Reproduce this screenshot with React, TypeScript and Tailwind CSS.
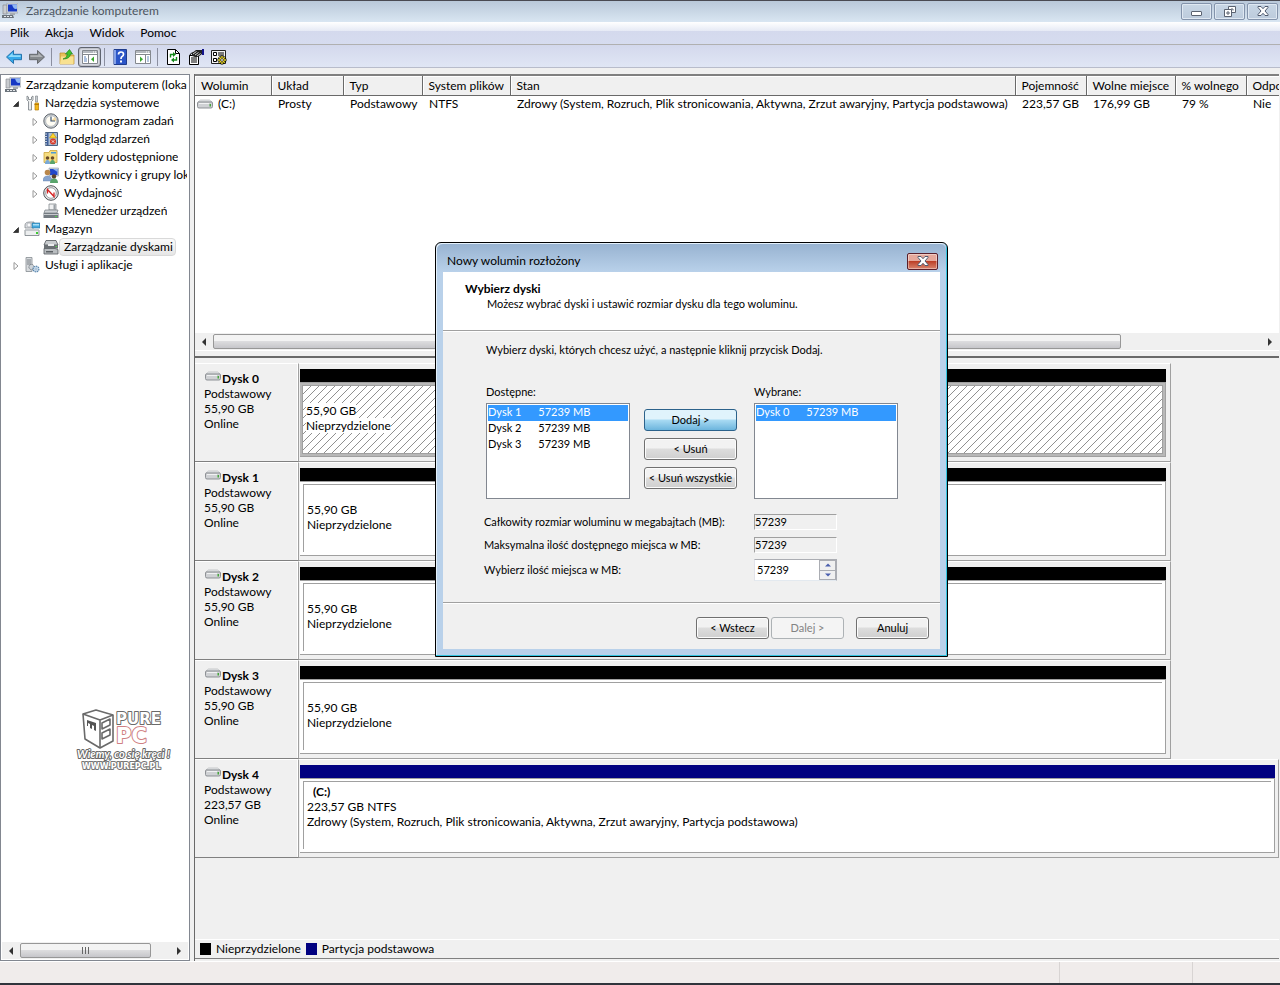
import { useState, type ReactNode } from 'react';
import { clsx } from 'clsx';

interface IconProps {
  children: ReactNode;
  className?: string;
}

const Icon = ({ children, className }: IconProps) => (
  <svg viewBox="0 0 16 16" className={clsx('h-4 w-4 shrink-0', className)} aria-hidden="true">
    {children}
  </svg>
);

const ComputerIcon = () => (
  <Icon>
    <path d="M1 2h4v9H1z" fill="#c9ccd0" stroke="#7d8288" strokeWidth=".6" />
    <path d="M5 0h11v10H5z" fill="#d9dde2" stroke="#8d949c" strokeWidth=".6" />
    <path d="M6 1.500h9v7H6z" fill="#1638c4" />
    <path d="M10 1.500h5v4q-3 2-5-4z" fill="#8fb6f4" />
    <path d="M8 10h5v2H8z" fill="#a7acb2" />
    <path d="M0 12h11l1 3H0z" fill="#6c747c" />
    <path d="M2 13h2v1H2zM5 13h2v1H5zM8 13h2v1H8z" fill="#e6e9ec" />
  </Icon>
);

const ToolsIcon = () => (
  <Icon>
    <path d="M3 1v4l1.500 1.500V15h3V6.500L9 5V1L7.500 2v2.500h-3V2z" fill="#eceeef" stroke="#777d83" strokeWidth=".8" />
    <path d="M11.500 1h2v6h-2z" fill="#c9cdd1" stroke="#777d83" strokeWidth=".6" />
    <path d="M11 8h3.500v7H11z" fill="#f3b71b" stroke="#b57b08" strokeWidth=".7" />
    <path d="M10.500 9.500h4.500" stroke="#b57b08" />
  </Icon>
);

const ClockIcon = () => (
  <Icon>
    <circle cx="8" cy="8" r="7.200" fill="#c8cdd2" stroke="#62686e" />
    <circle cx="8" cy="8" r="5.300" fill="#fffdf4" stroke="#a0a5aa" strokeWidth=".5" />
    <path d="M8 8l4-4a5 5 0 0 1 1 4z" fill="#f6dba0" />
    <path d="M8 3.500V8h4" fill="none" stroke="#3d5573" strokeWidth="1.200" />
  </Icon>
);

const EventIcon = () => (
  <Icon>
    <path d="M2.500 1.500h12v13h-12z" fill="#aebed2" stroke="#4b6384" />
    <path d="M3 2h2.500v12H3z" fill="#3f5f9a" />
    <path d="M1 3h3M1 5.500h3M1 8h3M1 10.500h3M1 13h3" stroke="#dfe3e8" strokeWidth=".9" />
    <path d="M10 2l3.500 5h-7z" fill="#ffd42a" stroke="#a98107" strokeWidth=".5" />
    <circle cx="10" cy="10.500" r="3" fill="#d63a2a" />
    <path d="M8.800 9.300l2.400 2.400m0-2.400l-2.400 2.400" stroke="#fff" strokeWidth=".8" />
  </Icon>
);

const SharedFolderIcon = () => (
  <Icon>
    <path d="M1 3.500h5l1-2h7v12H1z" fill="#f6dd80" stroke="#cda43c" strokeWidth=".8" />
    <path d="M8 3h5v1.500H8z" fill="#4c9bd6" />
    <circle cx="4.500" cy="9" r="1.800" fill="#6a4c2a" />
    <circle cx="9.500" cy="9" r="1.800" fill="#6a4c2a" />
    <path d="M2 15q0-4 2.500-4T7 15z" fill="#7aa9d6" />
    <path d="M7 15q0-4 2.500-4T12 15z" fill="#59a46b" />
  </Icon>
);

const UsersIcon = () => (
  <Icon>
    <path d="M6 1h9.500v8H6z" fill="#cfd6de" stroke="#8e98a4" strokeWidth=".6" />
    <path d="M7 2h7.500v6H7z" fill="#2247c9" />
    <path d="M10 2h4.500v3z" fill="#8db2f1" />
    <circle cx="4.500" cy="5.500" r="2.800" fill="#b9874b" />
    <path d="M0 14q0-5 4.500-5T9 14z" fill="#86a4cf" stroke="#5c7aa6" strokeWidth=".4" />
    <circle cx="11" cy="9.500" r="2.200" fill="#5d4127" />
    <path d="M7 16q0-4.500 4-4.500t4 4.500z" fill="#59a46b" />
  </Icon>
);

const PerfIcon = () => (
  <Icon>
    <circle cx="8" cy="8" r="7.300" fill="#e8e9ea" stroke="#4e5256" />
    <circle cx="8" cy="8" r="5.300" fill="#fff" stroke="#777b80" strokeWidth=".7" />
    <path d="M4.500 8.500v-4l6.500 7V7.500" fill="none" stroke="#d42222" strokeWidth="1.300" />
  </Icon>
);

const DeviceIcon = () => (
  <Icon>
    <path d="M6 1h7v6H6z" fill="#f0f1f2" stroke="#777d83" strokeWidth=".7" />
    <path d="M10.500 1.500h2v5h-2z" fill="#9aa0a6" />
    <path d="M2 7h13l-1 3H1z" fill="#cdd1d5" stroke="#767c82" strokeWidth=".7" />
    <path d="M.5 10h15v5H.5z" fill="#747b82" />
    <path d="M1 11h14v1H1z" fill="#c6cacd" />
    <path d="M12 13h2v1h-2z" fill="#52d049" />
  </Icon>
);

const StorageIcon = () => (
  <Icon>
    <path d="M1 4q0-3 5-3h4v6H1z" fill="#dadde0" stroke="#7b8187" strokeWidth=".7" />
    <circle cx="5" cy="4" r="2" fill="#f9fafb" stroke="#9499a0" strokeWidth=".5" />
    <path d="M8 2h8v5H8z" fill="#45a9dd" stroke="#26709b" strokeWidth=".6" />
    <path d="M9 3h6v1.500H9z" fill="#a9def7" />
    <path d="M1 9h14v5.500H1z" fill="#eceeef" stroke="#757b81" strokeWidth=".8" />
    <path d="M2.500 8h11l1.500 2H1z" fill="#c4c8cc" />
    <path d="M12 11h2v2h-2z" fill="#3ec932" />
  </Icon>
);

const DiskMgmtIcon = () => (
  <Icon>
    <path d="M3 1.500h10l2 4.500H1z" fill="#c9cccf" stroke="#4f5458" strokeWidth=".8" />
    <path d="M1 6h14v3.500H1z" fill="#6b7074" />
    <path d="M5 5h6v2H5z" fill="#eceeef" />
    <path d="M1 9.500h11l3 1v4.500H1z" fill="#b9bdc0" stroke="#54595d" strokeWidth=".8" />
    <path d="M3 12h7v1.500H3z" fill="#5c6165" />
    <path d="M12.500 7h1.500v1h-1.500z" fill="#55d84b" />
  </Icon>
);

const ServicesIcon = () => (
  <Icon>
    <path d="M2 .5h6v14H2z" fill="#d8dbde" stroke="#858b91" strokeWidth=".8" />
    <path d="M3 3h4M3 5h4M3 7h4" stroke="#767c82" />
    <circle cx="7.500" cy="10" r="2.600" fill="#cfd4d9" stroke="#6d747b" strokeWidth=".9" strokeDasharray="1.500 .6" />
    <circle cx="12" cy="12" r="2.900" fill="#cfe0ef" stroke="#5a86ac" strokeWidth="1.200" strokeDasharray="1.500 .7" />
    <circle cx="12" cy="12" r="1" fill="#fff" stroke="#5a86ac" strokeWidth=".5" />
  </Icon>
);

const DriveIcon = () => (
  <svg viewBox="0 0 16 10" className="h-[10px] w-4 shrink-0" aria-hidden="true">
    <path d="M3.500 1h9l2.500 2H1z" fill="#e6e8ea" stroke="#b4b7ba" strokeWidth=".7" />
    <path d="M.5 4q0-1 1-1h13q1 0 1 1v3.500q0 1.500-1.500 1.500H2Q.5 9 .5 7.500z" fill="#cfd1d4" stroke="#85888c" strokeWidth=".9" />
    <path d="M2 4.500h10" stroke="#f1f2f3" />
    <path d="M12.500 5h1.500v2.500h-1.500z" fill="#45a53a" />
  </svg>
);

const BackIcon = () => (
  <Icon>
    <path d="M.5 8L7.500 1.500v3.800h8v5.400h-8v3.800z" fill="#35a9ea" stroke="#1c6ba6" strokeWidth=".9" />
    <path d="M2.200 8L6.600 4v2.300h8V8z" fill="#8fdcfb" />
  </Icon>
);

const ForwardIcon = () => (
  <Icon>
    <path d="M15.500 8L8.500 1.500v3.800h-8v5.400h8v3.800z" fill="#85898d" stroke="#5d6165" strokeWidth=".9" />
    <path d="M13.800 8L9.400 4v2.300h-8V8z" fill="#b0b3b6" />
  </Icon>
);

const UpFolderIcon = () => (
  <Icon>
    <path d="M1 4h5l1.500 2H15v9H1z" fill="#e8c15a" stroke="#b98b26" strokeWidth=".7" />
    <path d="M2 7.500h12.500V15H1z" fill="#f8e191" />
    <path d="M4 10q4-.5 4.500-5H6.500L10.500.5 13.500 5h-2Q11 10 4 10z" fill="#3fc22e" stroke="#23821a" strokeWidth=".7" />
  </Icon>
);

const PaneIcon = ({ flipped }: { flipped?: boolean }) => (
  <Icon>
    <path d="M.5 1.500h15v13H.5z" fill="#fff" stroke="#84888e" />
    <path d="M1 2h14v2H1z" fill="#b4b8be" />
    <path d="M11 3h1M13 3h1" stroke="#fff" />
    <path d="M1 5.500h14" stroke="#84888e" />
    {flipped ? (
      <>
        <path d="M10.500 6v8.500" stroke="#84888e" />
        <path d="M12 8h2M12 10h2M12 12h2" stroke="#6d8fc0" />
        <path d="M5 7.500v5.500L8 10.250z" fill="#39a82e" />
      </>
    ) : (
      <>
        <path d="M6.500 6v8.500" stroke="#84888e" />
        <path d="M2 8h2M2 10h3M2 12h3" stroke="#5e84bd" />
        <path d="M12 7.500v5.500L9 10.250z" fill="#39a82e" />
      </>
    )}
  </Icon>
);

const HelpIcon = () => (
  <Icon>
    <path d="M2 .5h12.500v15H2z" fill="#2b55c8" stroke="#203c8d" />
    <path d="M2 1h2v14H2z" fill="#86a2e6" />
    <path d="M6.500 5.500q0-2.500 2.500-2.500t2.500 2.200q0 1.500-1.500 2.300-1 .5-1 2.500" fill="none" stroke="#fff" strokeWidth="1.700" />
    <path d="M8 11.500h2v2H8z" fill="#fff" />
  </Icon>
);

const RefreshIcon = () => (
  <Icon>
    <path d="M2.500.5h8l4 4v11h-12z" fill="#fff" stroke="#000" />
    <path d="M10.500.5v4h4" fill="none" stroke="#000" />
    <path d="M5.500 8.500V5.500h3" fill="none" stroke="#168a1c" strokeWidth="1.400" />
    <path d="M8 3v5l3-2.500z" fill="#168a1c" />
    <path d="M11.500 8v3h-3" fill="none" stroke="#168a1c" strokeWidth="1.400" />
    <path d="M9 8.500v5L6 11z" fill="#168a1c" />
  </Icon>
);

const PropertiesIcon = () => (
  <Icon>
    <path d="M1.500 6.500h9v9h-9z" fill="#fff" stroke="#000" />
    <path d="M1.500 6.500l2-2.500h5M3 9h6M3 11h6M3 13h6" fill="none" stroke="#000" />
    <path d="M4 4l4-3h6v4l-4 3H7L4 7z" fill="#222" />
    <path d="M5 5l3.500-2.500M7 6l3.500-2.500M9 7l3.500-2.500" stroke="#fff" strokeWidth=".8" />
    <path d="M14 0h2v6h-2z" fill="#14148c" />
  </Icon>
);

const SettingsIcon = () => (
  <Icon>
    <path d="M.5 1.500h14v13H.5z" fill="#f3f3f3" stroke="#222" />
    <path d="M2.500 3.500h3v3h-3zM2.500 9.500h3v3h-3z" fill="#fff" stroke="#000" />
    <path d="M7 4h6M7 6h6M7 10h3" stroke="#000" />
    <path d="M11 6.500v9M6.500 11h9M8 8l6 6M14 8l-6 6" stroke="#000" strokeWidth="2.600" />
    <path d="M11 7v8M7 11h8M8.300 8.300l5.400 5.400M13.700 8.300l-5.400 5.400" stroke="#f2df2c" strokeWidth="1.400" />
    <circle cx="11" cy="11" r="1.400" fill="#fff" stroke="#000" strokeWidth=".7" />
  </Icon>
);

const Cross = () => (
  <svg viewBox="0 0 12 10" className="h-[10px] w-3" aria-hidden="true">
    <path d="M1 .5h3l2 2.200L8 .5h3v1L8 5l3 3.500v1H8L6 7.300 4 9.500H1v-1L4 5 1 1.500z" fill="#fff" stroke="#4f5a6e" />
  </svg>
);

const Arrow = ({ className, d }: { className?: string; d: string }) => (
  <svg viewBox="0 0 8 8" className={clsx('h-2 w-2', className)} aria-hidden="true">
    <path d={d} fill="currentColor" />
  </svg>
);

const LEFT = 'M6 0v8L2 4z';
const RIGHT = 'M2 0v8l4-4z';
const UP = 'M0 6h8L4 2z';
const DOWN = 'M0 2h8L4 6z';

interface TreeNode {
  label: string;
  icon: ReactNode;
  level: 0 | 1 | 2;
  expander?: 'open' | 'closed';
  selected?: boolean;
}

const tree: TreeNode[] = [
  { label: 'Zarządzanie komputerem (lokalne)', icon: <ComputerIcon />, level: 0 },
  { label: 'Narzędzia systemowe', icon: <ToolsIcon />, level: 1, expander: 'open' },
  { label: 'Harmonogram zadań', icon: <ClockIcon />, level: 2, expander: 'closed' },
  { label: 'Podgląd zdarzeń', icon: <EventIcon />, level: 2, expander: 'closed' },
  { label: 'Foldery udostępnione', icon: <SharedFolderIcon />, level: 2, expander: 'closed' },
  { label: 'Użytkownicy i grupy lokalne', icon: <UsersIcon />, level: 2, expander: 'closed' },
  { label: 'Wydajność', icon: <PerfIcon />, level: 2, expander: 'closed' },
  { label: 'Menedżer urządzeń', icon: <DeviceIcon />, level: 2 },
  { label: 'Magazyn', icon: <StorageIcon />, level: 1, expander: 'open' },
  { label: 'Zarządzanie dyskami', icon: <DiskMgmtIcon />, level: 2, selected: true },
  { label: 'Usługi i aplikacje', icon: <ServicesIcon />, level: 1, expander: 'closed' },
];

const indent = { 0: 'pl-[3px]', 1: 'pl-[6px]', 2: 'pl-[25px]' };

const TreeRow = ({ node }: { node: TreeNode }) => (
  <li className={clsx('flex h-[18px] items-center', indent[node.level])}>
    {node.level > 0 && (
      <span className="flex w-4 shrink-0 justify-center">
        {node.expander && (
          <svg viewBox="0 0 8 8" className="mt-[2px] h-2 w-2" aria-hidden="true">
            {node.expander === 'open' ? (
              <path d="M6.500 1.500v5h-5z" fill="#333" stroke="#111" strokeWidth=".6" />
            ) : (
              <path d="M2 .5v7L6 4z" fill="#fff" stroke="#989898" />
            )}
          </svg>
        )}
      </span>
    )}
    {node.icon}
    <span
      className={clsx(
        'h-[18px] overflow-hidden rounded-sm border px-1 leading-4 whitespace-nowrap',
        node.selected ? 'border-[#d9d9d9] bg-linear-to-b from-[#fafafa] to-[#e6e6e6] pr-[2px]' : 'border-transparent pr-0',
      )}
    >
      {node.label}
    </span>
  </li>
);

const ScrollBar = ({ thumb, grip }: { thumb: string; grip?: boolean }) => (
  <div className="flex h-[17px] items-center bg-[#f0f0f0]">
    <button type="button" aria-label="Przewiń w lewo" className="flex h-full w-[18px] items-center justify-center text-[#333]">
      <Arrow d={LEFT} />
    </button>
    <div className="h-full flex-1 py-px">
      <div
        className={clsx(
          'flex h-[15px] items-center justify-center gap-[2px] rounded-xs border border-[#979797] bg-linear-to-b from-[#f3f3f3] from-45% via-[#dcdcde] via-50% to-[#c6c6ca]',
          thumb,
        )}
      >
        {grip && [0, 1, 2].map((i) => <span key={i} className="h-[7px] w-px bg-[#666]" />)}
      </div>
    </div>
    <button type="button" aria-label="Przewiń w prawo" className="flex h-full w-[18px] items-center justify-center text-[#333]">
      <Arrow d={RIGHT} />
    </button>
  </div>
);

const PureLogo = () => (
  <svg viewBox="0 0 104 64" className="absolute top-[634px] left-[73px] h-16 w-[104px]" role="img" aria-label="PurePC">
    <g fill="#fff" stroke="#6a6a6a" strokeWidth="1.600" strokeLinejoin="round">
      <path d="M9 5L22 1l17 5v26l-13 7-15-9z" />
      <path d="M9 5l17 6 13-5M26 11v28" />
      <path d="M28 14l8-4v6l-8 4zM28 24l8-4v6l-8 4z" />
    </g>
    <path d="M13 11l9 3v8l-2-1v-4l-2-1v4l-2-1v-4l-2-1v3h-1z" fill="#555" />
    <g fill="#fff" strokeLinejoin="round" paintOrder="stroke">
      <text x="42" y="15" fontSize="15" fontWeight="700" fontFamily="DejaVu Sans" stroke="#6a6a6a" strokeWidth="2">PURE</text>
      <text x="42" y="34" fontSize="21" fontWeight="700" fontFamily="DejaVu Sans" stroke="#cf7f83" strokeWidth="2">PC</text>
      <text x="3" y="49" fontSize="11" fontWeight="700" fontStyle="italic" fontFamily="Lato" stroke="#666" strokeWidth="2">Wiemy, co się kręci !</text>
      <text x="8" y="60" fontSize="8" fontWeight="700" fontFamily="DejaVu Sans" stroke="#777" strokeWidth="2">WWW.PUREPC.PL</text>
    </g>
  </svg>
);

const columns = [
  { label: 'Wolumin', width: 'w-[76px]', value: '(C:)' },
  { label: 'Układ', width: 'w-[72px]', value: 'Prosty' },
  { label: 'Typ', width: 'w-[79px]', value: 'Podstawowy' },
  { label: 'System plików', width: 'w-[88px]', value: 'NTFS' },
  { label: 'Stan', width: 'w-[505px]', value: 'Zdrowy (System, Rozruch, Plik stronicowania, Aktywna, Zrzut awaryjny, Partycja podstawowa)' },
  { label: 'Pojemność', width: 'w-[71px]', value: '223,57 GB' },
  { label: 'Wolne miejsce', width: 'w-[89px]', value: '176,99 GB' },
  { label: '% wolnego', width: 'w-[71px]', value: '79 %' },
  { label: 'Odporność na uszkodzenia', width: 'w-[160px]', value: 'Nie' },
];

const VolumeTable = () => (
  <table className="w-[1211px] table-fixed border-collapse text-left">
    <thead>
      <tr className="h-[19px] bg-[#f0f0f0]">
        {columns.map((c) => (
          <th
            key={c.label}
            className={clsx('overflow-hidden border-r border-b border-[#696969] pt-[2px] pr-0 pb-0 pl-[6px] font-normal whitespace-nowrap shadow-[inset_1px_1px_#fff]', c.width)}
          >
            {c.label}
          </th>
        ))}
      </tr>
    </thead>
    <tbody>
      <tr className="h-[18px]">
        {columns.map((c, i) => (
          <td key={c.label} className={clsx('whitespace-nowrap', i === 0 ? 'pl-[2px]' : 'pl-[7px]')}>
            {i === 0 ? (
              <span className="flex items-center gap-[5px]">
                <DriveIcon />
                {c.value}
              </span>
            ) : (
              c.value
            )}
          </td>
        ))}
      </tr>
    </tbody>
  </table>
);

interface Disk {
  name: string;
  size: string;
  volume?: string;
  lines: string[];
  selected?: boolean;
}

const disks: Disk[] = [
  { name: 'Dysk 0', size: '55,90 GB', lines: ['55,90 GB', 'Nieprzydzielone'], selected: true },
  { name: 'Dysk 1', size: '55,90 GB', lines: ['55,90 GB', 'Nieprzydzielone'] },
  { name: 'Dysk 2', size: '55,90 GB', lines: ['55,90 GB', 'Nieprzydzielone'] },
  { name: 'Dysk 3', size: '55,90 GB', lines: ['55,90 GB', 'Nieprzydzielone'] },
  {
    name: 'Dysk 4',
    size: '223,57 GB',
    volume: '(C:)',
    lines: ['223,57 GB NTFS', 'Zdrowy (System, Rozruch, Plik stronicowania, Aktywna, Zrzut awaryjny, Partycja podstawowa)'],
  },
];

const DiskRow = ({ disk }: { disk: Disk }) => (
  <section className="flex h-[99px] leading-[15px]">
    <div className="w-[104px] shrink-0 border-t border-r border-b border-t-white border-r-[#a0a0a0] border-b-[#808080] pt-[7px] pl-[9px] shadow-[inset_-1px_0_#fff]">
      <h2 className="flex items-start gap-px pl-px font-bold">
        <DriveIcon />
        {disk.name}
      </h2>
      <p>Podstawowy</p>
      <p>{disk.size}</p>
      <p>Online</p>
    </div>
    <div className="min-w-0 flex-1">
      <div
        className={clsx(
          'flex h-full flex-col border-t border-r border-b border-t-white border-r-[#a0a0a0] border-b-[#a0a0a0] pt-[5px] pb-1 pl-px',
          disk.volume ? 'pr-[3px]' : 'w-[89%] pr-1',
        )}
      >
        <div className={clsx('h-[13px]', disk.volume ? 'bg-[#000080]' : 'bg-black')} />
        <div
          className={clsx(
            'flex-1 border-t border-r border-b border-[#a0a0a0]',
            disk.selected ? 'bg-[#b8b8b8] p-[2px]' : 'bg-white p-[3px] pt-[2px]',
          )}
        >
          <div
            className={clsx(
              'flex h-full flex-col items-start border-[#a0a0a0] pl-[3px]',
              disk.volume ? 'pt-[2px]' : 'pt-[17px]',
              disk.selected
                ? 'border bg-white bg-[linear-gradient(135deg,transparent_46%,#909090_46%_54%,transparent_54%)] bg-[size:8px_8px]'
                : 'border-t border-l',
            )}
          >
            {disk.volume && <p className="pl-[6px] font-bold">{disk.volume}</p>}
            {disk.lines.map((line) => (
              <p key={line} className={clsx('whitespace-nowrap', disk.selected && 'bg-white')}>
                {line}
              </p>
            ))}
          </div>
        </div>
      </div>
    </div>
  </section>
);

const dialogButton =
  'h-[22px] rounded-[3px] border border-[#707070] bg-linear-to-b from-[#f2f2f2] from-45% via-[#dddddd] via-50% to-[#cfcfcf] whitespace-nowrap shadow-[inset_0_0_0_1px_#fcfcfc]';

const readOnlyField = 'h-4 border border-t-[#a0a0a0] border-r-white border-b-white border-l-[#a0a0a0] bg-[#f0f0f0]';

const DiskList = ({ id, label, items }: { id: string; label: string; items: string[] }) => {
  const [value, setValue] = useState([items[0]]);
  return (
    <div className="w-36">
      <label htmlFor={id} className="mb-[3px] block leading-4">
        {label}
      </label>
      <select
        id={id}
        multiple
        value={value}
        onChange={(e) => setValue(Array.from(e.target.selectedOptions, (o) => o.value))}
        className="block h-24 w-full overflow-hidden border border-[#828790] bg-white p-px"
      >
        {items.map((item) => (
          <option
            key={item}
            value={item}
            className="h-4 min-h-0 p-0 leading-4 checked:bg-[linear-gradient(#3399ff,#3399ff)] checked:[-webkit-text-fill-color:#fff]"
          >
            {`${item}\u00a0\u00a0\u00a0\u00a0\u00a0\u00a057239 MB`}
          </option>
        ))}
      </select>
    </div>
  );
};

const SizeDialog = () => {
  const [size, setSize] = useState('57239');
  const step = (n: number) => setSize(String(Number(size) + n));

  return (
    <div
      role="dialog"
      aria-labelledby="dialog-title"
      className="absolute top-[242px] left-[435px] w-[513px] rounded-t-md border border-black bg-[#b9d1ea] p-[7px] pt-0 text-[11px] shadow-[inset_-1px_-1px_#35c5e0,inset_1px_1px_#e3f0fb]"
    >
      <header className="-mx-[6px] mt-px flex h-[28px] items-center rounded-t-md bg-linear-to-b from-[#98b3d1] to-[#b9d1ea] pr-2 pl-[10px]">
        <h2 id="dialog-title" className="flex-1 pt-[6px] text-[12px]">
          Nowy wolumin rozłożony
        </h2>
        <button
          type="button"
          aria-label="Zamknij"
          className="mt-[6px] flex h-[17px] w-[31px] items-center justify-center rounded-xs border border-[#5a1f2a] bg-linear-to-b from-[#e6a99c] from-45% via-[#bc4027] via-50% to-[#d8836c] shadow-[inset_0_0_0_1px_#ffffff66]"
        >
          <Cross />
        </button>
      </header>

      <div className="h-[59px] border-b border-[#a0a0a0] bg-white pt-[9px] pl-[22px]">
        <h3 className="text-[12px] leading-[15px] font-bold">Wybierz dyski</h3>
        <p className="pl-[22px] leading-[15px]">Możesz wybrać dyski i ustawić rozmiar dysku dla tego woluminu.</p>
      </div>

      <div className="border-t border-white bg-[#f0f0f0]">
        <div className="pt-[10px] pr-[42px] pb-[21px] pl-[43px]">
          <p className="leading-4">Wybierz dyski, których chcesz użyć, a następnie kliknij przycisk Dodaj.</p>

          <div className="mt-[26px] flex">
            <DiskList id="available" label="Dostępne:" items={['Dysk 1', 'Dysk 2', 'Dysk 3']} />
            <div className="mr-[17px] ml-[14px] flex w-[93px] flex-col gap-[7px] pt-[25px]">
              <button
                type="button"
                className="h-[22px] rounded-[3px] border border-[#2c628b] bg-linear-to-b from-[#e0f3fc] from-45% via-[#a9dbf3] via-50% to-[#6cb5dd]"
              >
                Dodaj &gt;
              </button>
              <button type="button" className={dialogButton}>
                &lt; Usuń
              </button>
              <button type="button" className={dialogButton}>
                &lt; Usuń wszystkie
              </button>
            </div>
            <DiskList id="chosen" label="Wybrane:" items={['Dysk 0']} />
          </div>

          <div className="-ml-[2px] grid grid-cols-[270px_83px] grid-rows-[17px_17px_22px] items-center gap-y-[6px] pt-[14px]">
            <label htmlFor="total">Całkowity rozmiar woluminu w megabajtach (MB):</label>
            <input id="total" readOnly value="57239" className={readOnlyField} />
            <label htmlFor="max">Maksymalna ilość dostępnego miejsca w MB:</label>
            <input id="max" readOnly value="57239" className={readOnlyField} />
            <label htmlFor="size">Wybierz ilość miejsca w MB:</label>
            <div className="flex h-[22px] border border-[#abadb3] border-b-[#e3e9ef] border-l-[#e2e3ea] bg-white">
              <input id="size" value={size} onChange={(e) => setSize(e.target.value)} className="w-16 pl-[2px]" />
              <div className="flex w-[17px] flex-col gap-px bg-[#abadb3] p-px">
                <button type="button" aria-label="Więcej" onClick={() => step(1)} className="flex flex-1 items-center justify-center bg-[#f0f0f0] text-[#4a5fae]">
                  <Arrow d={UP} className="h-[6px] w-[6px]" />
                </button>
                <button type="button" aria-label="Mniej" onClick={() => step(-1)} className="flex flex-1 items-center justify-center bg-[#f0f0f0] text-[#4a5fae]">
                  <Arrow d={DOWN} className="h-[6px] w-[6px]" />
                </button>
              </div>
            </div>
          </div>
        </div>

        <footer className="flex h-[47px] justify-end gap-[2px] border-t border-[#a0a0a0] pt-[14px] pr-[11px] shadow-[inset_0_1px_#fff]">
          <button type="button" className={clsx(dialogButton, 'w-[73px]')}>
            &lt; Wstecz
          </button>
          <button type="button" disabled className="h-[22px] w-[73px] rounded-[3px] border border-[#adb2b5] bg-[#f4f4f4] text-[#838383]">
            Dalej &gt;
          </button>
          <button type="button" className={clsx(dialogButton, 'ml-[10px] w-[73px]')}>
            Anuluj
          </button>
        </footer>
      </div>
    </div>
  );
};

const windowButton =
  'flex h-[17px] w-[31px] items-center justify-center rounded-xs border border-[#8393ab] bg-linear-to-b from-[#c8d6e5] to-[#bccbdc] shadow-[inset_0_0_0_1px_#dfe8f2]';

const toolButton = 'flex h-5 w-[23px] items-center justify-center';

const Separator = () => <span className="mx-[3px] h-[18px] w-px bg-[#8b8fa0]" />;

export default function App() {
  return (
    <div className="relative flex h-screen min-h-[700px] flex-col overflow-hidden bg-[#f0f0f0] font-['Lato','Noto_Sans',sans-serif] text-[12px] leading-4 text-black">
      <header className="flex h-[22px] shrink-0 items-center border-t border-[#4a4a52] bg-linear-to-b from-[#b9c8d9] to-[#d9e6f2] pr-[2px] pb-px pl-[2px]">
        <ComputerIcon />
        <h1 className="flex-1 pl-2 text-[#4c5560]">Zarządzanie komputerem</h1>
        <div className="flex gap-[2px]">
          <button type="button" aria-label="Minimalizuj" className={windowButton}>
            <span className="mt-1 h-[5px] w-[11px] rounded-[1px] border border-[#5a6270] bg-white" />
          </button>
          <button type="button" aria-label="Przywróć" className={windowButton}>
            <svg viewBox="0 0 12 11" className="h-[11px] w-3" fill="#fff" stroke="#5a6270">
              <path d="M4.500.5h7v6h-7z" />
              <path d="M7 3h2v1.500" />
              <path d="M.5 3.500h7v7h-7z" />
              <path d="M3 6h2v2H3z" />
            </svg>
          </button>
          <button type="button" aria-label="Zamknij okno" className={windowButton}>
            <Cross />
          </button>
        </div>
      </header>

      <nav className="flex h-[23px] shrink-0 items-center gap-4 border-b border-[#b0b0b0] bg-[linear-gradient(#fff,#e6eaf5_40%,#d4d9ed_41%,#d6dcef)] pl-[10px]">
        {['Plik', 'Akcja', 'Widok', 'Pomoc'].map((item) => (
          <button key={item} type="button">
            {item}
          </button>
        ))}
      </nav>

      <div role="toolbar" className="flex h-[23px] shrink-0 items-center border-b border-[#b8bccb] bg-linear-to-b from-[#d3d8ec] to-[#e0e6f5] pt-[2px] pl-[2px]">
        <button type="button" aria-label="Wstecz" className={toolButton}>
          <BackIcon />
        </button>
        <button type="button" aria-label="Dalej" className={toolButton}>
          <ForwardIcon />
        </button>
        <Separator />
        <button type="button" aria-label="W górę" className={toolButton}>
          <UpFolderIcon />
        </button>
        <button type="button" aria-label="Drzewo konsoli" className={clsx(toolButton, 'rounded-[3px] border border-[#5f6470] bg-[#dcdfe8] shadow-[inset_0_0_2px_#777]')}>
          <PaneIcon />
        </button>
        <Separator />
        <button type="button" aria-label="Pomoc" className={toolButton}>
          <HelpIcon />
        </button>
        <button type="button" aria-label="Okienko akcji" className={toolButton}>
          <PaneIcon flipped />
        </button>
        <Separator />
        <button type="button" aria-label="Odśwież" className={toolButton}>
          <RefreshIcon />
        </button>
        <button type="button" aria-label="Właściwości" className={toolButton}>
          <PropertiesIcon />
        </button>
        <button type="button" aria-label="Ustawienia" className={toolButton}>
          <SettingsIcon />
        </button>
      </div>

      <main className="flex min-h-0 flex-1 gap-1 pt-[6px]">
        <aside className="relative flex w-[190px] shrink-0 flex-col border border-[#828790] bg-white px-px pb-px">
          <ul className="flex-1 overflow-hidden pt-px">
            {tree.map((node) => (
              <TreeRow key={node.label} node={node} />
            ))}
          </ul>
          <ScrollBar thumb="w-[131px]" grip />
          <PureLogo />
        </aside>

        <div className="mr-px flex min-w-0 flex-1 flex-col border-l border-[#696969]">
          <div className="flex h-[284px] shrink-0 flex-col border-t-2 border-b-2 border-t-[#808080] border-b-[#696969] bg-white">
            <div className="flex-1 overflow-hidden">
              <VolumeTable />
            </div>
            <ScrollBar thumb="w-13/15" />
            <div className="h-[6px] border-t border-white bg-[#f0f0f0]" />
          </div>

          <div className="flex-1 overflow-hidden pt-[5px]">
            {disks.map((disk) => (
              <DiskRow key={disk.name} disk={disk} />
            ))}
          </div>

          <footer className="mb-[2px] flex h-[20px] shrink-0 items-center border-t border-b border-t-white border-b-[#808080] pl-[5px]">
            <span className="h-3 w-[11px] bg-black" />
            <span className="pr-[5px] pl-[5px]">Nieprzydzielone</span>
            <span className="h-3 w-[11px] bg-[#000080]" />
            <span className="pl-[5px]">Partycja podstawowa</span>
          </footer>
        </div>
      </main>

      <footer className="flex h-6 shrink-0 justify-end border-t border-b-2 border-t-white border-b-[#30343c] bg-[#f0eceb]">
        <span className="w-[133px] border-l border-[#d8d4d3]" />
        <span className="w-[88px] border-l border-[#d8d4d3]" />
      </footer>

      <SizeDialog />
    </div>
  );
}
